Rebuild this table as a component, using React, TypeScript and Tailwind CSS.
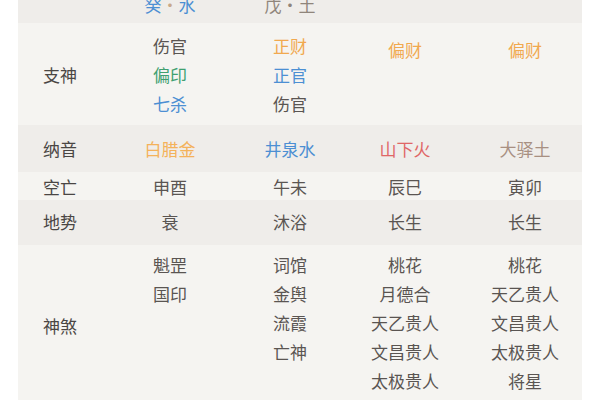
import React from "react";

const font = { fontFamily: '"Noto Sans CJK SC", "Noto Sans", sans-serif' };

type Cell = { lines: { t: string; c: string }[]; extra?: string };

const G = "text-[#5a5552]";
const O = "text-[#f1a94f]";
const B = "text-[#4c8fd3]";
const GR = "text-[#40a070]";
const R = "text-[#e06666]";
const BR = "text-[#a89082]";

const cols = "grid grid-cols-[84px_136px_104px_126px_114px]";

function Lines({ cell, pt }: { cell: Cell; pt: string }) {
  return (
    <div className={`flex flex-col items-center ${pt} ${cell.extra ?? ""}`}>
      {cell.lines.map((l, i) => (
        <div key={i} className={`leading-[29px] ${l.c}`}>
          {l.t}
        </div>
      ))}
    </div>
  );
}

function Row({
  label,
  cells,
  bg,
  h,
  pt,
  center,
}: {
  label: string;
  cells: Cell[];
  bg: string;
  h: string;
  pt: string;
  center?: boolean;
}) {
  return (
    <div className={`${cols} ${bg} ${h} ${center ? "items-center" : "items-start"}`}>
      <div className={`flex justify-center text-[#4a4644] leading-[29px] ${center ? pt : "self-center"}`}>
        {label}
      </div>
      {cells.map((c, i) => (
        <Lines key={i} cell={c} pt={pt} />
      ))}
    </div>
  );
}

const one = (t: string, c: string = G): Cell => ({ lines: [{ t, c }] });
const many = (ts: string[], c: string = G): Cell => ({ lines: ts.map((t) => ({ t, c })) });

export default function App() {
  return (
    <div className="w-[600px] h-[400px] overflow-hidden bg-white px-[18px] text-[17px]" style={font}>
      <div className="flex flex-col">
        <div className={`${cols} bg-[#efedea] h-[23px] items-start overflow-hidden`}>
          <div />
          <div className={`flex justify-center leading-[29px] -mt-[10px] ${B}`}>
            癸<span className="text-[#c9a98a]">·</span>水
          </div>
          <div className="flex justify-center leading-[29px] -mt-[10px] text-[#8f857b]">戊·土</div>
          <div />
          <div />
        </div>
        <Row
          label="支神"
          bg="bg-[#f5f4f1]"
          h="h-[102px]"
          pt="pt-[8px]"
          cells={[
            { lines: [{ t: "伤官", c: G }, { t: "偏印", c: GR }, { t: "七杀", c: B }] },
            { lines: [{ t: "正财", c: O }, { t: "正官", c: B }, { t: "伤官", c: G }] },
            { lines: [{ t: "偏财", c: O }], extra: "mt-[4px]" },
            { lines: [{ t: "偏财", c: O }], extra: "mt-[4px]" },
          ]}
        />
        <Row
          label="纳音"
          bg="bg-[#efedea]"
          h="h-[47px]"
          pt="pt-0"
          center
          cells={[one("白腊金", "text-[#f4b25a]"), one("井泉水", B), one("山下火", R), one("大驿土", BR)]}
        />
        <Row
          label="空亡"
          bg="bg-[#f5f4f1]"
          h="h-[28px]"
          pt="pt-0"
          center
          cells={[one("申酉"), one("午未"), one("辰巳"), one("寅卯")]}
        />
        <Row
          label="地势"
          bg="bg-[#efedea]"
          h="h-[45px]"
          pt="pb-[3px]"
          center
          cells={[one("衰"), one("沐浴"), one("长生"), one("长生")]}
        />
        <Row
          label="神煞"
          bg="bg-[#f5f4f1]"
          h="h-[160px]"
          pt="pt-[5px]"
          cells={[
            many(["魁罡", "国印"]),
            many(["词馆", "金舆", "流霞", "亡神"]),
            many(["桃花", "月德合", "天乙贵人", "文昌贵人", "太极贵人"]),
            many(["桃花", "天乙贵人", "文昌贵人", "太极贵人", "将星"]),
          ]}
        />
      </div>
    </div>
  );
}
